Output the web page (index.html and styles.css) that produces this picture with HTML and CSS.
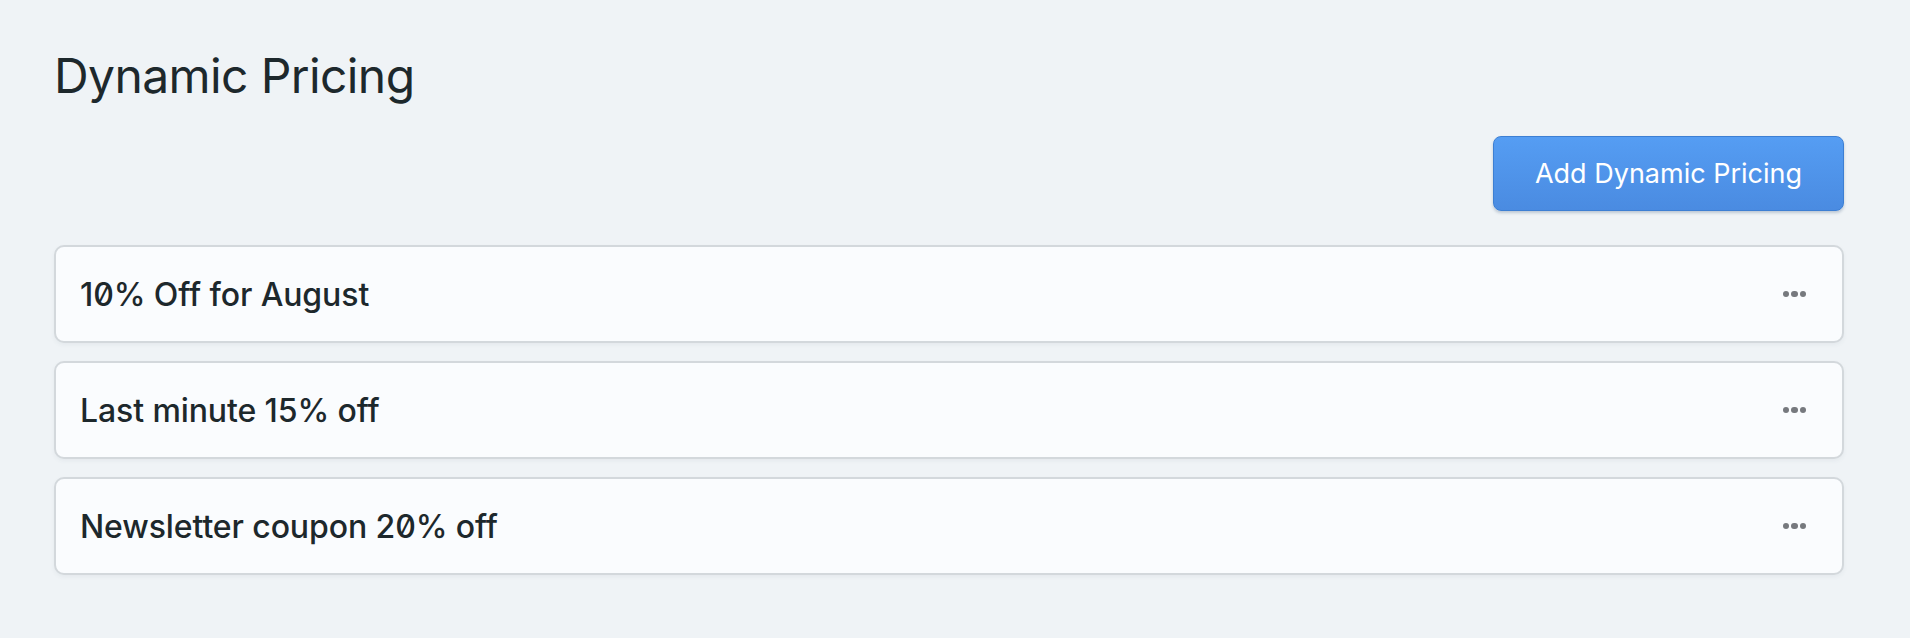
FILE: index.html
```html
<!DOCTYPE html>
<html lang="en">
<head>
<meta charset="utf-8">
<title>Dynamic Pricing</title>
<link rel="stylesheet" href="styles.css">
</head>
<body>
<main class="page">
  <h1 class="title">Dynamic Pricing</h1>
  <div class="toolbar">
    <button class="btn-primary" type="button">Add Dynamic Pricing</button>
  </div>
  <ul class="list">
    <li class="card">
      <span class="card-name">10% Off for August</span>
      <span class="more" aria-label="More"><i></i><i></i><i></i></span>
    </li>
    <li class="card">
      <span class="card-name">Last minute 15% off</span>
      <span class="more" aria-label="More"><i></i><i></i><i></i></span>
    </li>
    <li class="card">
      <span class="card-name">Newsletter coupon 20% off</span>
      <span class="more" aria-label="More"><i></i><i></i><i></i></span>
    </li>
  </ul>
</main>
</body>
</html>
```
FILE: styles.css
```css
* { box-sizing: border-box; }
html, body { margin: 0; padding: 0; }
body {
  background: #eff3f6;
  font-family: Inter, "Noto Sans", sans-serif;
  font-feature-settings: "zero" 1;
  color: #1d282c;
  width: 1910px;
  height: 638px;
  overflow: hidden;
}
.page {
  width: 1790px;
  margin-left: 54px;
  padding-top: 46px;
}
.title {
  margin: 0;
  font-size: 48px;
  font-weight: 400;
  line-height: 60px;
  letter-spacing: -0.6px;
}
.toolbar {
  display: flex;
  justify-content: flex-end;
  margin-top: 30px;
}
.btn-primary {
  width: 351px;
  height: 75px;
  border: 1px solid #3d7fd3;
  border-radius: 8px;
  background: linear-gradient(#559df3, #4a8be1);
  color: #ffffff;
  font-family: Inter, "Noto Sans", sans-serif;
  font-size: 27px;
  font-weight: 400;
  box-shadow: 0 2px 3px rgba(40, 70, 110, 0.25);
  padding: 0;
}
.list {
  list-style: none;
  margin: 34px 0 0;
  padding: 0;
  display: grid;
  gap: 18px;
}
.card {
  height: 98px;
  display: flex;
  align-items: center;
  justify-content: space-between;
  padding: 0 36px 0 24px;
  background: #fafcfe;
  border: 2px solid #d3d8dc;
  border-radius: 10px;
  box-shadow: 0 2px 4px rgba(60, 80, 100, 0.06);
}
.card-name {
  font-size: 32px;
  font-weight: 500;
  letter-spacing: -0.1px;
  color: #1d282c;
}
.more {
  display: flex;
  gap: 2px;
}
.more i {
  display: block;
  width: 6.5px;
  height: 6.5px;
  border-radius: 50%;
  background: #76797e;
}
```
